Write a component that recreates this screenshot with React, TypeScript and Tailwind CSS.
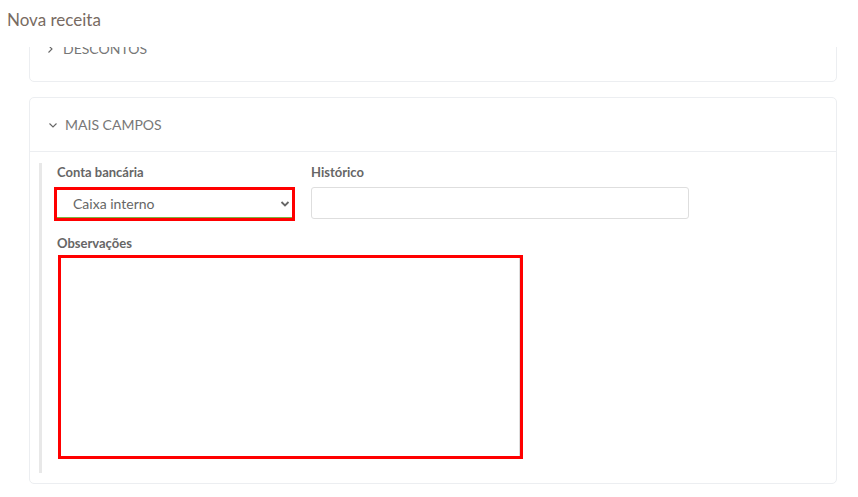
import React from 'react'

function ChevronDown() {
  return (
    <svg width="10" height="10" viewBox="0 0 10 10" className="text-[#666]">
      <path d="M1.5 3.5 L5 7 L8.5 3.5" fill="none" stroke="currentColor" strokeWidth="1.1" />
    </svg>
  )
}

function ChevronRight() {
  return (
    <svg width="10" height="10" viewBox="0 0 10 10" className="text-[#666]">
      <path d="M3.5 1.5 L7 5 L3.5 8.5" fill="none" stroke="currentColor" strokeWidth="1.1" />
    </svg>
  )
}

export default function App() {
  return (
    <div className="w-[858px] h-[497px] bg-white flex flex-col overflow-hidden" style={{ fontFamily: 'Lato, "Open Sans", sans-serif' }}>
      <div className="h-[47px] shrink-0 pl-[7px] pt-[9px] text-[17px] text-[#786b62] leading-[22px]">Nova receita</div>

      <div className="flex-1 overflow-hidden">
        <div className="ml-[29px] w-[808px] -mt-[27px] border border-[#eceef1] rounded-[5px] h-[62px]">
          <div className="flex items-center gap-[8px] pl-[15px] pt-[20px] text-[14px] text-[#777] leading-[16px]">
            <ChevronRight />
            <span>DESCONTOS</span>
          </div>
        </div>

        <div className="ml-[29px] w-[808px] mt-[15px] border border-[#eceef1] rounded-[5px]">
          <div className="h-[54px] flex items-center gap-[7px] pl-[18px] border-b border-[#eceef1] text-[14px] text-[#777]">
            <ChevronDown />
            <span>MAIS CAMPOS</span>
          </div>

          <div className="pt-[11px] pb-[10px] pl-[9px]">
            <div className="border-l-[3px] border-[#e8e8e8] pl-[15px] pb-[14px]">
              <div className="flex gap-[16px]">
                <div className="flex flex-col">
                  <label className="text-[13px] font-bold text-[#666] leading-[16px] pt-[1px]">Conta bancária</label>
                  <div className="-ml-[3px] mt-[7px] w-[241px] h-[34px] border-[3px] border-[#ff0000]">
                    <div className="h-full flex items-center justify-between border-b border-[#7cb342] pl-[16px] pr-[2px] text-[14px] text-[#666]">
                      <span>Caixa interno</span>
                      <svg width="10" height="8" viewBox="0 0 10 8">
                        <path d="M1.5 2 L5 5.5 L8.5 2" fill="none" stroke="#666" strokeWidth="1.8" />
                      </svg>
                    </div>
                  </div>
                </div>
                <div className="flex flex-col">
                  <label className="text-[13px] font-bold text-[#666] leading-[16px] pt-[1px]">Histórico</label>
                  <input className="mt-[7px] w-[378px] h-[32px] border border-[#dedede] rounded-[3px] outline-none" />
                </div>
              </div>

              <label className="block mt-[14px] text-[13px] font-bold text-[#666] leading-[16px]">Observações</label>
              <div className="ml-[1px] mt-[4px] w-[465px] h-[204px] border-[3px] border-[#ff0000]">
                <textarea className="w-full h-full resize-none border-r border-[#dddddd] outline-none" />
              </div>
            </div>
          </div>
        </div>
      </div>
    </div>
  )
}
